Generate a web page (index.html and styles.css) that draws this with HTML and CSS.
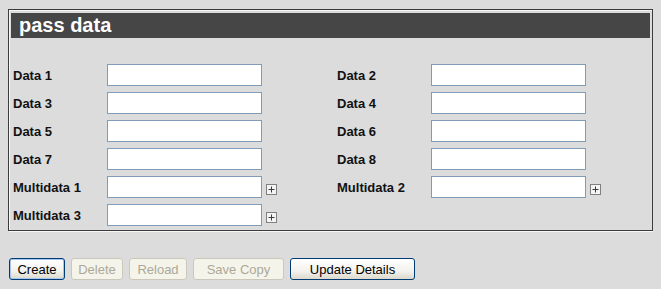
FILE: index.html
```html
<!doctype html>
<html lang="en">

<head>
    <meta charset="utf-8">
    <meta name="viewport" content="width=device-width, initial-scale=1">
    <title>pass data</title>
    <link rel="stylesheet" href="styles.css">
</head>

<body>
    <div class="panel">
        <h2 class="panel-title">pass data</h2>

        <div class="fields">
            <label class="field-label" for="data1">Data 1</label>
            <div class="field-cell"><input type="text" id="data1" class="field-input"></div>
            <label class="field-label" for="data2">Data 2</label>
            <div class="field-cell"><input type="text" id="data2" class="field-input"></div>

            <label class="field-label" for="data3">Data 3</label>
            <div class="field-cell"><input type="text" id="data3" class="field-input"></div>
            <label class="field-label" for="data4">Data 4</label>
            <div class="field-cell"><input type="text" id="data4" class="field-input"></div>

            <label class="field-label" for="data5">Data 5</label>
            <div class="field-cell"><input type="text" id="data5" class="field-input"></div>
            <label class="field-label" for="data6">Data 6</label>
            <div class="field-cell"><input type="text" id="data6" class="field-input"></div>

            <label class="field-label" for="data7">Data 7</label>
            <div class="field-cell"><input type="text" id="data7" class="field-input"></div>
            <label class="field-label" for="data8">Data 8</label>
            <div class="field-cell"><input type="text" id="data8" class="field-input"></div>

            <label class="field-label" for="multi1">Multidata 1</label>
            <div class="field-cell">
                <input type="text" id="multi1" class="field-input">
                <svg class="expand" width="11" height="11" viewBox="0 0 11 11"><rect x="0.5" y="0.5" width="10" height="10" fill="#f4f4f4" stroke="#808080"/><path d="M2.5 5.5h6M5.5 2.5v6" stroke="#3a3a3a" stroke-width="1"/></svg>
            </div>
            <label class="field-label" for="multi2">Multidata 2</label>
            <div class="field-cell">
                <input type="text" id="multi2" class="field-input">
                <svg class="expand" width="11" height="11" viewBox="0 0 11 11"><rect x="0.5" y="0.5" width="10" height="10" fill="#f4f4f4" stroke="#808080"/><path d="M2.5 5.5h6M5.5 2.5v6" stroke="#3a3a3a" stroke-width="1"/></svg>
            </div>

            <label class="field-label" for="multi3">Multidata 3</label>
            <div class="field-cell">
                <input type="text" id="multi3" class="field-input">
                <svg class="expand" width="11" height="11" viewBox="0 0 11 11"><rect x="0.5" y="0.5" width="10" height="10" fill="#f4f4f4" stroke="#808080"/><path d="M2.5 5.5h6M5.5 2.5v6" stroke="#3a3a3a" stroke-width="1"/></svg>
            </div>
        </div>
    </div>

    <div class="actions">
        <button class="btn btn-default btn-create">Create</button>
        <button class="btn btn-delete" disabled>Delete</button>
        <button class="btn btn-reload" disabled>Reload</button>
        <button class="btn btn-save" disabled>Save Copy</button>
        <button class="btn btn-update">Update Details</button>
    </div>
</body>

</html>
```

FILE: styles.css
```css
body {
    margin: 8px;
    background-color: #dcdcdc;
    font-family: "Liberation Sans", Arial, sans-serif;
    color: #111;
}

.panel {
    box-sizing: border-box;
    width: 645px;
    margin-top: 1px;
    padding: 3px 2px 4px 2px;
    border: 1px solid #3c3c3c;
    box-shadow: inset 1px 1px 0 #f6f6f6, 1px 1px 0 #f6f6f6;
}

.panel-title {
    margin: 0;
    padding-left: 8px;
    background-color: #464646;
    color: white;
    font-size: 20px;
    font-weight: bold;
    line-height: 25px;
}

.fields {
    display: grid;
    grid-template-columns: 94px 230px 94px auto;
    grid-auto-rows: 22px;
    row-gap: 6px;
    margin-top: 26px;
    padding-left: 2px;
}

.field-label {
    font-size: 13px;
    font-weight: bold;
    line-height: 23px;
}

.field-cell {
    display: flex;
    align-items: flex-end;
}

.field-input {
    box-sizing: border-box;
    width: 155px;
    height: 22px;
    margin: 0;
    padding: 1px 3px;
    border: 1px solid #7f9db9;
    background: white;
    font-family: inherit;
    font-size: 12px;
}

.expand {
    display: block;
    margin-left: 4px;
    margin-bottom: 3px;
}

.actions {
    display: flex;
    gap: 6px;
    margin-top: 27px;
    margin-left: 1px;
}

.btn {
    box-sizing: border-box;
    height: 22px;
    padding: 0;
    border: 1px solid #003c74;
    border-radius: 3px;
    background: linear-gradient(#ffffff, #f3f2ee 60%, #dcd8cc);
    color: #000;
    font-family: "Liberation Sans", Arial, sans-serif;
    font-size: 13px;
}

.btn-default {
    box-shadow: inset 0 0 0 1px #a9c4ee;
}

.btn:disabled {
    border-color: #cbc8bb;
    background: #f5f4ea;
    color: #aca899;
}

.btn-create { width: 56px; }
.btn-delete { width: 52px; }
.btn-reload { width: 58px; }
.btn-save { width: 91px; }
.btn-update { width: 125px; }
```
